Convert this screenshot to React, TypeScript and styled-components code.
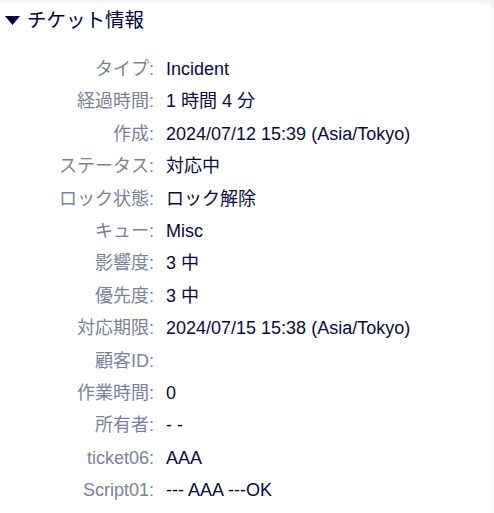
import React from "react";
import styled, { createGlobalStyle } from "styled-components";

const GlobalStyle = createGlobalStyle`
  html, body {
    margin: 0;
    padding: 0;
    background: #f3f4f6;
  }
  body {
    font-family: "Liberation Sans", Arial, "Noto Sans CJK JP", sans-serif;
  }
`;

const Card = styled.section`
  margin: 3px 1px 0 0;
  background: #ffffff;
  border-top-right-radius: 10px;
  min-height: 510px;
`;

const Header = styled.div`
  display: flex;
  align-items: center;
  gap: 7px;
  height: 34px;
  padding-left: 5px;
  color: #000033;
  font-size: 19.5px;
`;

const Triangle = styled.svg`
  width: 15px;
  height: 9px;
  flex: none;
`;

const Title = styled.span`
  line-height: 34px;
`;

const List = styled.dl`
  display: grid;
  grid-template-columns: 154px 1fr;
  column-gap: 12px;
  margin: 16px 0 0 0;
  font-size: 18px;
`;

const Label = styled.dt`
  text-align: right;
  color: #7b7f9c;
  line-height: 32.4px;
  white-space: nowrap;
`;

const Value = styled.dd`
  margin: 0;
  color: #0a0a3a;
  line-height: 32.4px;
  white-space: nowrap;
`;

const rows: [string, string][] = [
  ["タイプ", "Incident"],
  ["経過時間", "1 時間 4 分"],
  ["作成", "2024/07/12 15:39 (Asia/Tokyo)"],
  ["ステータス", "対応中"],
  ["ロック状態", "ロック解除"],
  ["キュー", "Misc"],
  ["影響度", "3 中"],
  ["優先度", "3 中"],
  ["対応期限", "2024/07/15 15:38 (Asia/Tokyo)"],
  ["顧客ID", ""],
  ["作業時間", "0"],
  ["所有者", "- -"],
  ["ticket06", "AAA"],
  ["Script01", "--- AAA ---OK"],
];

export default function App() {
  return (
    <>
      <GlobalStyle />
      <Card>
        <Header>
          <Triangle viewBox="0 0 15 9">
            <polygon points="0,0 15,0 7.5,9" fill="#000033" />
          </Triangle>
          <Title>チケット情報</Title>
        </Header>
        <List>
          {rows.map(([k, v]) => (
            <React.Fragment key={k}>
              <Label>{k}:</Label>
              <Value>{v || "\u00a0"}</Value>
            </React.Fragment>
          ))}
        </List>
      </Card>
    </>
  );
}
